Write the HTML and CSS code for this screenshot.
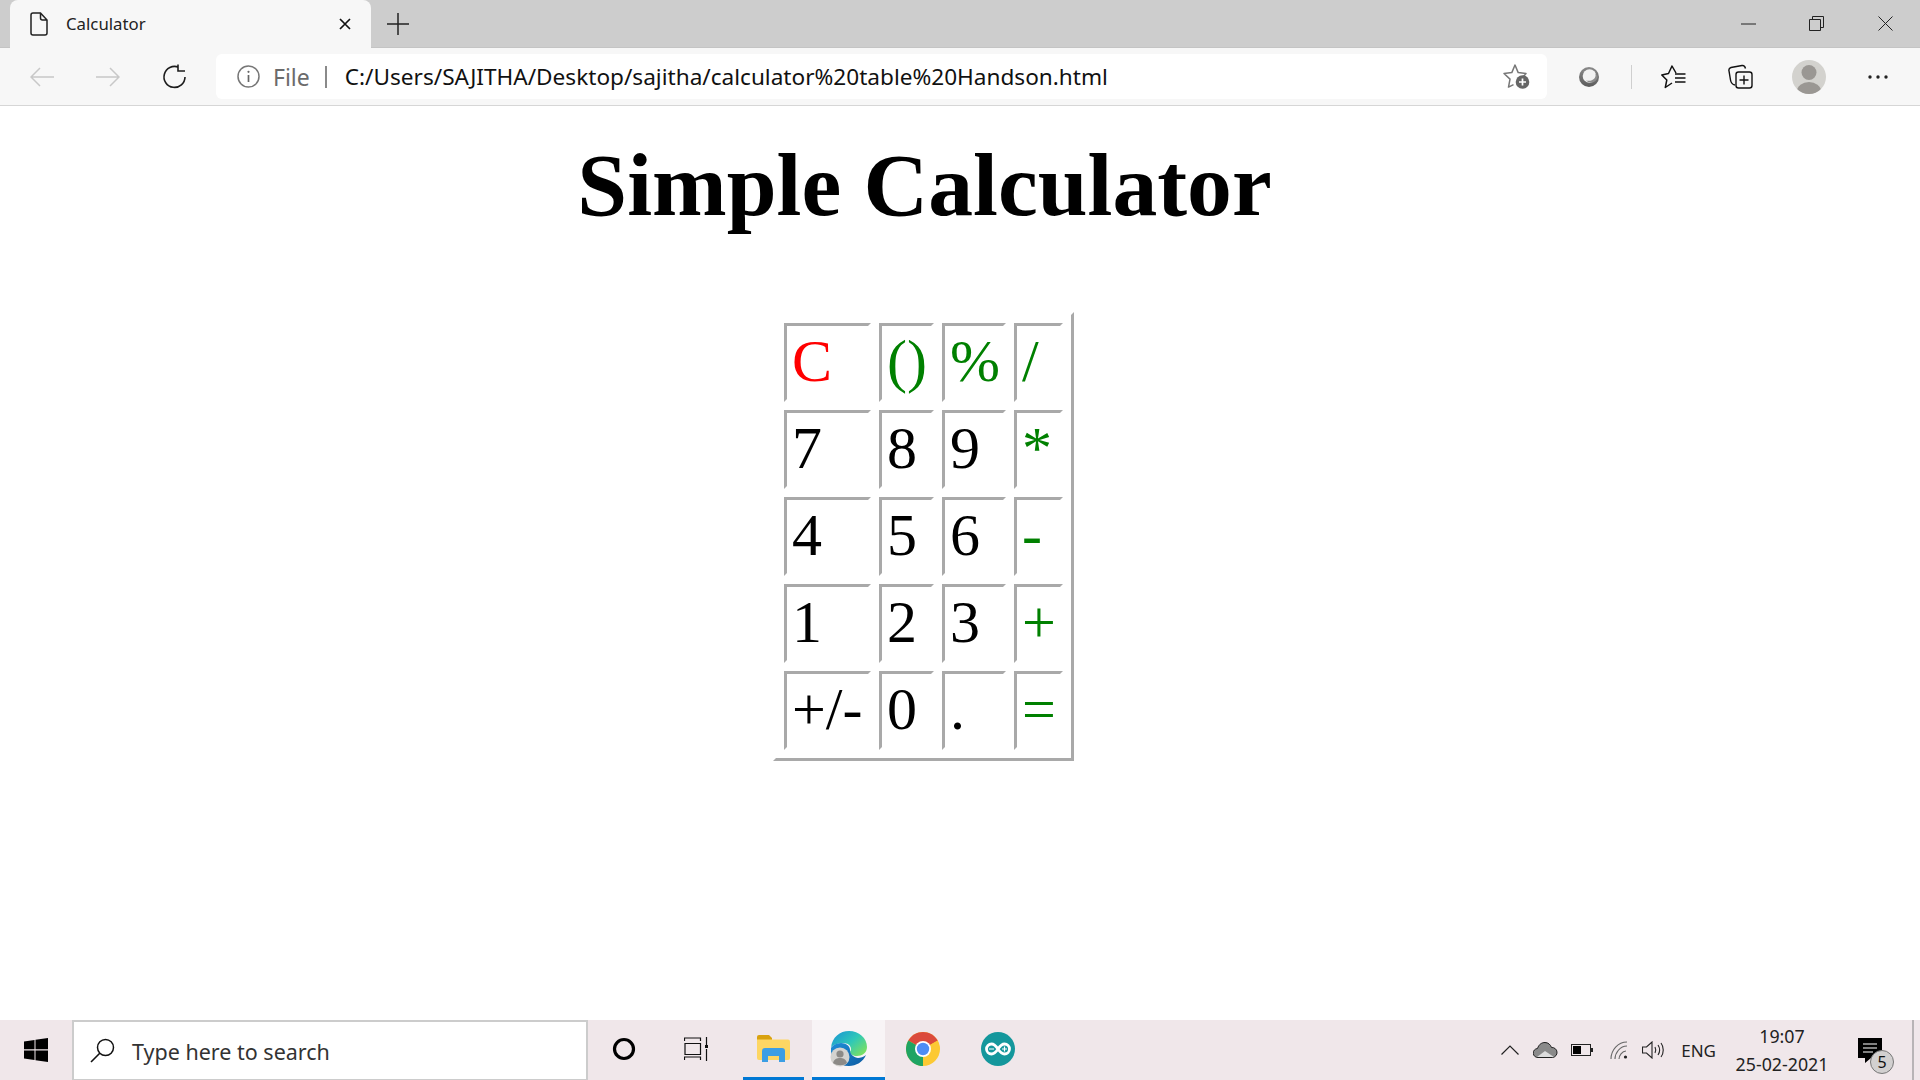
FILE: index.html
```html
<!DOCTYPE html>
<html lang="en">
<head>
<meta charset="utf-8">
<title>Calculator</title>
<link rel="stylesheet" href="styles.css">
</head>
<body>
<div class="tabstrip">
  <div class="tab">
    <svg class="doc" width="18" height="24" viewBox="0 0 18 24"><path d="M3 1h7.500L17 8v13a2 2 0 0 1-2 2H3a2 2 0 0 1-2-2V3a2 2 0 0 1 2-2zM10.500 1v5a2 2 0 0 0 2 2H17" fill="none" stroke="#222" stroke-width="1.500"/></svg>
    <span class="tab-title">Calculator</span>
    <svg class="tab-close" width="14" height="14" viewBox="0 0 14 14"><path d="M2 2l10 10M12 2L2 12" stroke="#111" stroke-width="1.700"/></svg>
  </div>
  <svg class="plus" width="22" height="22" viewBox="0 0 22 22"><path d="M11 0v22M0 11h22" stroke="#222" stroke-width="1.500"/></svg>
  <div class="win-controls">
    <svg class="win-min" width="15" height="2" viewBox="0 0 15 2"><path d="M0 1h15" stroke="#222" stroke-width="1"/></svg>
    <svg class="win-max" width="15" height="15" viewBox="0 0 15 15"><path d="M.5 3.500h11v11H.5zM3.500 3.500V.5h11v11h-3" fill="none" stroke="#222" stroke-width="1"/></svg>
    <svg class="win-close" width="15" height="15" viewBox="0 0 15 15"><path d="M.5.500l14 14M14.500.500l-14 14" stroke="#222" stroke-width="1"/></svg>
  </div>
</div>

<div class="toolbar">
  <div class="slot nav-first"><svg width="24" height="20" viewBox="0 0 24 20"><path d="M24 10H1M10 1l-9 9 9 9" fill="none" stroke="#c8c8c8" stroke-width="1.500"/></svg></div>
  <div class="slot nav"><svg width="24" height="20" viewBox="0 0 24 20"><path d="M0 10h23M14 1l9 9-9 9" fill="none" stroke="#c8c8c8" stroke-width="1.500"/></svg></div>
  <div class="slot nav"><svg width="25" height="25" viewBox="0 0 25 25"><path d="M16.500 3.200A10.500 10.500 0 1 0 23 13M16 .5v6.500h7" fill="none" stroke="#1c1c1c" stroke-width="1.600"/></svg></div>
  <div class="address">
    <svg class="info" width="23" height="23" viewBox="0 0 23 23"><circle cx="11.500" cy="11.500" r="10.500" fill="none" stroke="#777" stroke-width="1.500"/><path d="M11.500 10v7" stroke="#666" stroke-width="1.700"/><circle cx="11.500" cy="6.800" r="1.100" fill="#666"/></svg>
    <span class="file">File</span>
    <span class="divider"></span>
    <span class="url">C:/Users/SAJITHA/Desktop/sajitha/calculator%20table%20Handson.html</span>
    <svg class="star-add" width="27" height="25" viewBox="0 0 27 25"><path d="M19.500 13.500L23 9.500l-7.800-.9L12 1 8.800 8.600 1 9.500l6 5.600-1.500 8 5-2.500" fill="none" stroke="#777" stroke-width="1.500" stroke-linejoin="round"/><circle cx="19.500" cy="18" r="6.800" fill="#666"/><path d="M19.500 14.500v7M16 18h7" stroke="#fff" stroke-width="1.700"/></svg>
  </div>
  <div class="slot after-address"><svg width="22" height="24" viewBox="0 0 22 24"><defs><linearGradient id="ring" x1="0" y1="0" x2="0" y2="1"><stop offset="0" stop-color="#8a8a8a"/><stop offset="1" stop-color="#5c5c5c"/></linearGradient></defs><circle cx="11" cy="12" r="10" fill="url(#ring)"/><circle cx="11.500" cy="11" r="6.800" fill="#f2f2f2"/><path d="M17.500 9c.8 4-3 8-9.500 6.500 3 3 10 3 11.500-3 .4-2-.5-3-2-3.500z" fill="#8c8c8c"/></svg></div>
  <span class="tool-sep"></span>
  <div class="slot after-sep"><svg width="25" height="24" viewBox="0 0 25 24"><path d="M15 8L11 1 7.500 8.500.8 10l5 5-1.500 7.500L11 18" fill="none" stroke="#111" stroke-width="1.500" stroke-linejoin="round"/><path d="M14 9h10.500M14 13h10.500M14 17h10.500" stroke="#111" stroke-width="1.400"/></svg></div>
  <div class="slot tool-a"><svg width="25" height="25" viewBox="0 0 25 25"><path d="M7 21c-3-.5-4-2-4.500-5L1 7c-.5-2 .5-3 2-3.500L14 1.500c2-.3 3 .7 3.500 3" fill="none" stroke="#111" stroke-width="1.400"/><rect x="8" y="8" width="16" height="16" rx="2.500" fill="#f7f7f7" stroke="#111" stroke-width="1.400"/><path d="M16 11.500v9M11.500 16h9" stroke="#111" stroke-width="1.400"/></svg></div>
  <div class="slot tool-b"><svg width="34" height="34" viewBox="0 0 34 34"><defs><clipPath id="avatar-clip"><circle cx="17" cy="17" r="17"/></clipPath></defs><circle cx="17" cy="17" r="17" fill="#d3d2ce"/><g clip-path="url(#avatar-clip)" fill="#9a9793"><circle cx="17" cy="12.500" r="7.500"/><ellipse cx="17" cy="31" rx="12" ry="9"/></g></svg></div>
  <div class="slot tool-b"><svg width="20" height="4" viewBox="0 0 20 4"><circle cx="2" cy="2" r="1.700" fill="#222"/><circle cx="10" cy="2" r="1.700" fill="#222"/><circle cx="18" cy="2" r="1.700" fill="#222"/></svg></div>
</div>

<main class="page">
  <h1 class="title">Simple Calculator</h1>
  <table class="calc">
    <tr><td class="c1 red">C</td><td class="c2 green">()</td><td class="c3 green">%</td><td class="c4 green">/</td></tr>
    <tr><td class="c1">7</td><td class="c2">8</td><td class="c3">9</td><td class="c4 green">*</td></tr>
    <tr><td class="c1">4</td><td class="c2">5</td><td class="c3">6</td><td class="c4 green">-</td></tr>
    <tr><td class="c1">1</td><td class="c2">2</td><td class="c3">3</td><td class="c4 green">+</td></tr>
    <tr><td class="c1">+/-</td><td class="c2">0</td><td class="c3">.</td><td class="c4 green">=</td></tr>
  </table>
</main>

<footer class="taskbar">
  <div class="start"><svg width="24" height="24" viewBox="0 0 24 24"><path d="M0 3.400L10.500 1.900V11.300H0zM11.500 1.700L24 0V11.300H11.500zM0 12.500H10.500V22L0 20.500zM11.500 12.500H24V24L11.500 22.300z" fill="#000"/></svg></div>
  <div class="search">
    <svg class="glass" width="25" height="25" viewBox="0 0 25 25"><circle cx="15.500" cy="9.500" r="8" fill="none" stroke="#111" stroke-width="1.500"/><path d="M10 15L1 24" stroke="#111" stroke-width="1.600"/></svg>
    <span class="search-text">Type here to search</span>
  </div>
  <div class="task cortana"><svg width="24" height="24" viewBox="0 0 24 24"><circle cx="12" cy="12" r="9.500" fill="none" stroke="#000" stroke-width="3.200"/></svg></div>
  <div class="task taskview"><svg width="25" height="24" viewBox="0 0 25 24"><path d="M.5 4V1h16v3M.5 23v-3h16v3M1 6.500h15.500V17.500H1z" fill="none" stroke="#111" stroke-width="1.200"/><path d="M22.500 0v9M22.500 12v12" stroke="#111" stroke-width="1.200"/><rect x="21" y="8" width="3" height="3" fill="#111"/></svg></div>
  <div class="task explorer running"><svg width="33" height="27" viewBox="0 0 33 27"><path d="M0 2a2 2 0 0 1 2-2h10l3 3v3H0z" fill="#d9a210"/><path d="M0 4.500h31a2 2 0 0 1 2 2V23a2 2 0 0 1-2 2H2a2 2 0 0 1-2-2z" fill="#fdd663"/><path d="M5 27V16a3 3 0 0 1 3-3h17a3 3 0 0 1 3 3v11h-6v-6H11v6z" fill="#3c9ee4"/></svg></div>
  <div class="task edge running active"><svg width="38" height="38" viewBox="0 0 38 38"><defs><linearGradient id="edge-top" x1="0" y1="0" x2="1" y2=".8"><stop offset="0" stop-color="#1a90d8"/><stop offset=".55" stop-color="#2fc8b8"/><stop offset="1" stop-color="#7ce060"/></linearGradient><linearGradient id="edge-low" x1="0" y1="0" x2="1" y2="1"><stop offset="0" stop-color="#1f8fd9"/><stop offset="1" stop-color="#0d5aa0"/></linearGradient></defs><path d="M1 18C2 7 10 1 19 1c10 0 18 7 18 16 0 6-5 9-10 9-4 0-7-2-7-4 0-1 1-1 1-3 0-4-4-6-8-6-6 0-12 3-12 5z" fill="url(#edge-top)"/><path d="M1 18c1-2 5-5 10-5 5 0 9 3 9 7 0 3 2 7 8 8 2 0 6-1 8-3-3 7-10 11-17 11C8 36 0 29 1 18z" fill="url(#edge-low)"/><circle cx="10" cy="27" r="9.500" fill="#d4d3d0"/><circle cx="10" cy="24" r="3.600" fill="#8c8a87"/><path d="M3 33c1-4 4-5 7-5s6 1 7 5c-3 3-10 3-14 0z" fill="#8c8a87"/></svg></div>
  <div class="task chrome"><svg width="34" height="34" viewBox="0 0 34 34"><circle cx="17" cy="17" r="17" fill="#fcc934"/><path d="M17 17L2.300 8.500A17 17 0 0 1 31.700 8.500z" fill="#db4a3c"/><path d="M17 17L2.300 8.500A17 17 0 0 0 17 34z" fill="#1fa463"/><path d="M17 17L31.700 8.500 34 17 17 34z" fill="#fcc934"/><circle cx="17" cy="17" r="8" fill="#fff"/><circle cx="17" cy="17" r="6.200" fill="#4e8df5"/></svg></div>
  <div class="task arduino"><svg width="34" height="34" viewBox="0 0 34 34"><circle cx="17" cy="17" r="17" fill="#14979c"/><path d="M17 17c-2-3-4-5-6.500-5a5 5 0 0 0 0 10c2.500 0 4.500-2 6.500-5s4-5 6.500-5a5 5 0 0 1 0 10c-2.500 0-4.500-2-6.500-5z" fill="none" stroke="#fff" stroke-width="2.800"/><path d="M8 17h5M21 17h5M23.500 14.500v5" stroke="#fff" stroke-width="1.200"/></svg></div>
  <div class="tray">
    <svg class="t-chev" width="18" height="10" viewBox="0 0 18 10"><path d="M.5 9.500L9 1l8.500 8.500" fill="none" stroke="#222" stroke-width="1.200"/></svg>
    <svg class="t-cloud" width="25" height="16" viewBox="0 0 25 16"><path d="M5 15.500a4.500 4.500 0 0 1-.5-9C6 2 9 .5 12 .5c3 0 5.500 2 6.500 5a5 5 0 0 1 1 10z" fill="#8a8a8a" stroke="#222" stroke-width="1"/><path d="M4 15l8-6 9 6z" fill="#ddd"/></svg>
    <svg class="t-bat" width="22" height="12" viewBox="0 0 22 12"><rect x=".5" y=".5" width="19" height="11" fill="none" stroke="#222"/><rect x="2" y="2" width="8" height="8" fill="#000"/><rect x="20" y="4" width="2" height="4" fill="#222"/></svg>
    <svg class="t-wifi" width="18" height="18" viewBox="0 0 18 18"><path d="M1 18C1 9 8 1 17 1M5 18c0-6 5-13 12-13M9 18c0-3 3-8 7-8" fill="none" stroke="#666" stroke-width="1.100"/><circle cx="15.500" cy="16" r="1.600" fill="#222"/></svg>
    <svg class="t-vol" width="22" height="18" viewBox="0 0 22 18"><path d="M.5 6h4L10 1v16l-5.500-5h-4z" fill="none" stroke="#222" stroke-width="1.100"/><path d="M13 6c1 2 1 4 0 6M16 4c2 3 2 7 0 10M19 2c3 4 3 10 0 14" fill="none" stroke="#222" stroke-width="1.100"/></svg>
    <span class="lang">ENG</span>
    <div class="clock"><span>19:07</span><span>25-02-2021</span></div>
    <div class="notify">
      <svg width="24" height="25" viewBox="0 0 24 25"><path d="M0 0h24v20H13l-6 5v-5H0z" fill="#000"/><path d="M5 6h14M5 10h14M5 14h10" stroke="#fff" stroke-width="1.200"/></svg>
      <span class="badge">5</span>
    </div>
    <span class="show-desktop"></span>
  </div>
</footer>
</body>
</html>
```

FILE: styles.css
```css
* { box-sizing: border-box; }
html, body { margin: 0; padding: 0; }
body {
  width: 1920px;
  height: 1080px;
  overflow: hidden;
  display: flex;
  flex-direction: column;
  background: #fff;
  font-family: "Noto Sans", "Open Sans", sans-serif;
  color: #111;
}
svg { display: block; flex: none; }

/* Tab strip */
.tabstrip {
  height: 48px;
  flex: none;
  display: flex;
  align-items: center;
  padding-left: 10px;
  background: #cdcdcd;
  border-bottom: 1px solid #c4c4c4;
}
.tab {
  width: 361px;
  height: 48px;
  display: flex;
  align-items: center;
  padding-left: 20px;
  background: #f7f7f7;
  border-radius: 8px 8px 0 0;
}
.tab-title { margin-left: 18px; font-size: 16.800px; color: #222; flex: 1; }
.tab-close { margin-right: 19px; }
.plus { margin-left: 16px; }
.win-controls { margin-left: auto; display: flex; align-items: center; padding-right: 27px; }
.win-max { margin-left: 53px; }
.win-close { margin-left: 54px; }

/* Toolbar */
.toolbar {
  height: 58px;
  flex: none;
  display: flex;
  align-items: center;
  background: #f7f7f7;
  border-bottom: 1px solid #d6d6d6;
}
.slot { width: 54px; height: 45px; display: flex; align-items: center; justify-content: center; flex: none; }
.nav-first { margin-left: 15px; }
.nav { margin-left: 12px; }
.address {
  width: 1331px;
  height: 45px;
  margin-left: 15px;
  flex: none;
  display: flex;
  align-items: center;
  padding-left: 21px;
  padding-right: 17px;
  background: #fff;
  border-radius: 6px;
}
.file { margin-left: 13px; font-size: 23px; color: #6b6b6b; }
.divider { width: 2px; height: 22px; margin-left: 15px; background: #8a8a8a; flex: none; }
.url { margin-left: 18px; font-size: 22.600px; color: #111; flex: 1; white-space: nowrap; }
.after-address { margin-left: 15px; }
.tool-sep { width: 1px; height: 24px; margin-left: 15px; background: #cfcfcf; flex: none; }
.after-sep { margin-left: 14px; }
.tool-a { margin-left: 13px; }
.tool-b { margin-left: 15px; }

/* Page */
.page {
  flex: 1;
  display: flex;
  flex-direction: column;
  align-items: center;
  padding-right: 73px;
}
.title {
  margin: 27px 0 0 2px;
  font: bold 89.600px/104px "Liberation Serif", "Times New Roman", serif;
  color: #000;
}
.calc {
  margin-top: 75px;
  border-collapse: separate;
  border-spacing: 8px;
  border-width: 3px;
  border-style: solid;
  border-color: #fff #a9a9a9 #a9a9a9 #fff;
  table-layout: fixed;
  font-family: "Liberation Serif", "Times New Roman", serif;
  font-size: 60px;
  line-height: 66px;
  color: #000;
}
.calc td {
  height: 79px;
  padding: 2px 0 5px 5px;
  border-width: 3px;
  border-style: solid;
  border-color: #a9a9a9 #fff #fff #a9a9a9;
  vertical-align: top;
  white-space: nowrap;
}
.c1 { width: 87px; }
.c2 { width: 55px; }
.c3 { width: 64px; }
.c4 { width: 49px; }
.calc .red { color: #f00; }
.calc .green { color: #008000; }

/* Taskbar */
.taskbar {
  height: 60px;
  flex: none;
  display: flex;
  align-items: center;
  background: #f0e7ea;
}
.start { width: 72px; display: flex; justify-content: center; }
.search {
  width: 516px;
  height: 60px;
  display: flex;
  align-items: center;
  padding-left: 16px;
  background: #fff;
  border: 2px solid #cccccc;
  border-bottom-width: 1px;
}
.search-text { margin: 2px 0 0 17px; font-size: 21.500px; color: #333; }
.task {
  height: 60px;
  display: flex;
  align-items: center;
  justify-content: center;
  flex: none;
  padding-bottom: 3px;
}
.cortana { width: 72px; }
.taskview { width: 72px; }
.explorer { width: 61px; margin-left: 11px; }
.edge { width: 73px; margin-left: 8px; }
.chrome { width: 76px; }
.arduino { width: 74px; }
.running { border-bottom: 3px solid #0078d4; padding-bottom: 0; }
.active { background: #f8f4f6; }

/* Tray */
.tray { margin-left: auto; display: flex; align-items: center; height: 60px; }
.t-cloud { margin-left: 14px; }
.t-bat { margin-left: 13px; }
.t-wifi { margin-left: 17px; }
.t-vol { margin-left: 14px; }
.lang { margin-left: 17px; font-size: 17px; color: #222; }
.clock {
  margin-left: 20px;
  width: 92px;
  display: flex;
  flex-direction: column;
  align-items: center;
  gap: 6px;
  font-size: 17.800px;
  line-height: 22px;
  color: #222;
  white-space: nowrap;
}
.notify { position: relative; margin-left: 30px; margin-right: 30px; }
.badge {
  position: absolute;
  left: 12px;
  top: 12px;
  width: 24px;
  height: 24px;
  border-radius: 50%;
  border: 1px solid #777;
  background: #d2d0d0;
  color: #111;
  font-size: 16px;
  line-height: 22px;
  text-align: center;
}
.show-desktop { width: 2px; height: 60px; background: #b8b4b6; margin-right: 6px; }
```
